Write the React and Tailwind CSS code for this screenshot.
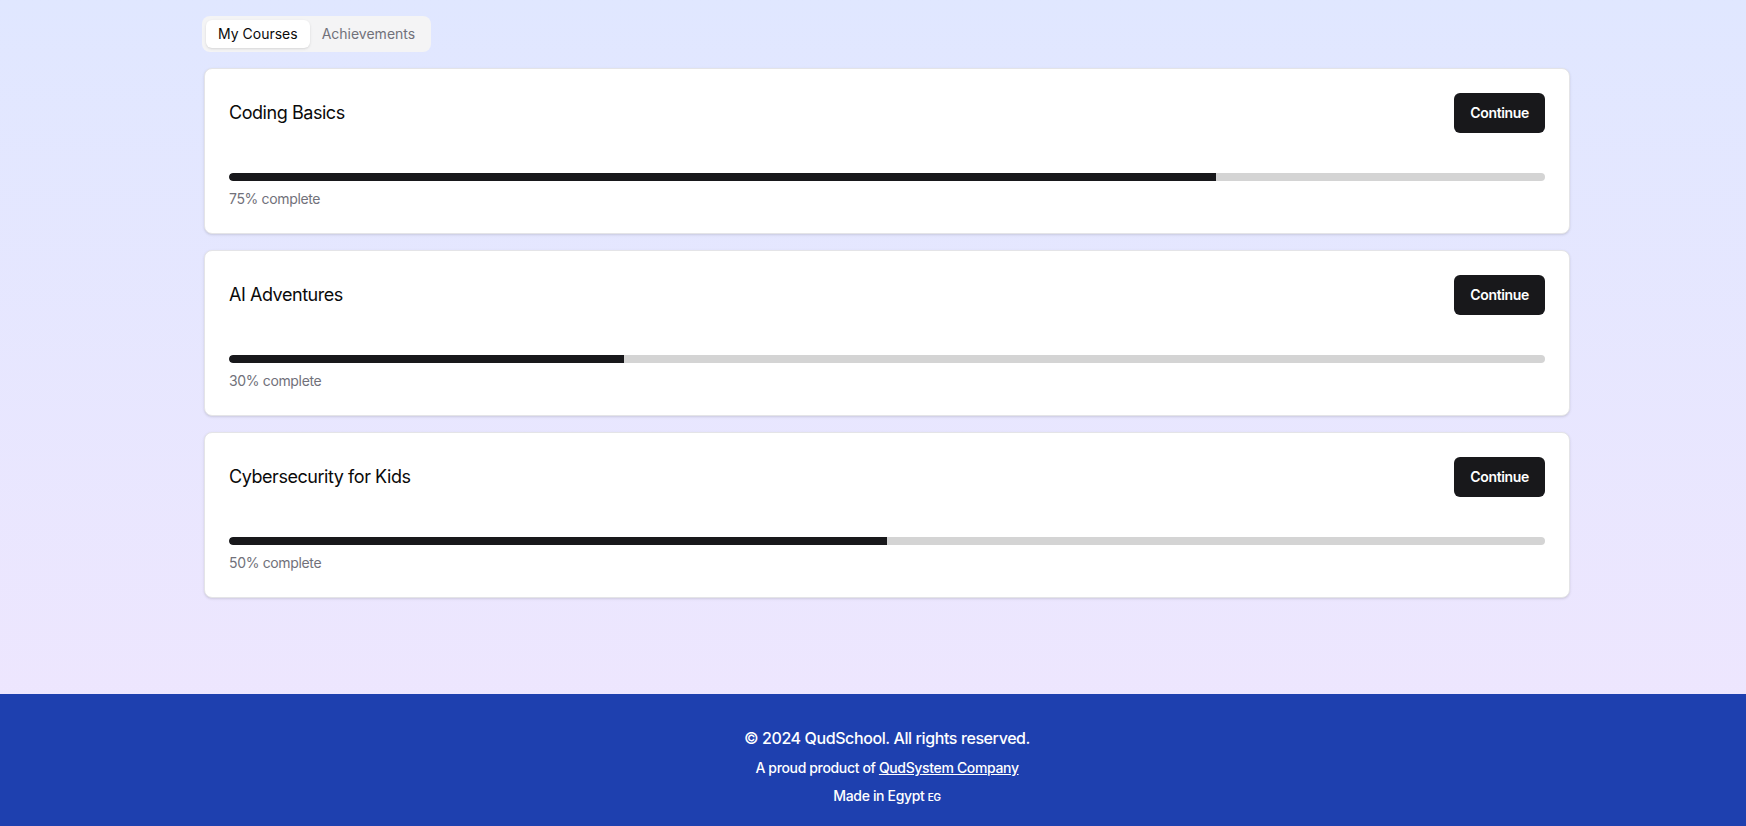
import React from "react";

const courses = [
  { title: "Coding Basics", pct: 75 },
  { title: "AI Adventures", pct: 30 },
  { title: "Cybersecurity for Kids", pct: 50 },
];

export default function App() {
  return (
    <div
      className="min-h-screen flex flex-col bg-gradient-to-b from-[#e0e7ff] to-[#f0e6fe]"
      style={{ fontFamily: "Inter, 'Noto Sans', sans-serif" }}
    >
      <main className="flex-1 pl-[28px] pt-4 pb-[96px]">
        <div className="mx-auto w-[1366px]">
          <div className="inline-flex items-center h-9 rounded-lg bg-[#f4f4f5] p-1 -ml-[2px]">
            <button className="h-7 px-3 rounded-md bg-white shadow-sm text-sm text-[#0a0a0a]">
              My Courses
            </button>
            <button className="h-7 px-3 rounded-md text-sm text-[#71717a]">
              Achievements
            </button>
          </div>
          <div className="mt-4 flex flex-col gap-4">
            {courses.map((c) => (
              <div
                key={c.title}
                className="rounded-lg border border-[#e4e4e7] bg-white shadow-sm p-6"
              >
                <div className="flex items-center justify-between h-10">
                  <h3 className="text-lg text-[#0a0a0a] tracking-tight">{c.title}</h3>
                  <button className="h-10 px-4 rounded-md bg-[#18181b] text-white text-sm font-semibold tracking-tight">
                    Continue
                  </button>
                </div>
                <div className="mt-10">
                  <div className="h-2 w-full rounded-full bg-[#d4d4d4] overflow-hidden">
                    <div
                      className="h-full bg-[#18181b] rounded-l-full"
                      style={{ width: `${c.pct}%` }}
                    />
                  </div>
                  <p className="mt-2 text-sm leading-5 text-[#71717a] tracking-tight">
                    {c.pct}% complete
                  </p>
                </div>
              </div>
            ))}
          </div>
        </div>
      </main>
      <footer className="bg-[#1e40af] text-white pl-[28px] pt-8 pb-8">
        <div className="flex flex-col items-center">
          <p className="text-base leading-6 font-medium tracking-tight">
            © 2024 QudSchool. All rights reserved.
          </p>
          <p className="mt-2 text-sm leading-5 font-medium tracking-tight">
            A proud product of{" "}
            <a href="#" className="underline">
              QudSystem Company
            </a>
          </p>
          <p className="mt-2 text-sm leading-5 font-medium tracking-tight">
            Made in Egypt <span className="text-[10px] font-semibold">EG</span>
          </p>
        </div>
      </footer>
    </div>
  );
}
